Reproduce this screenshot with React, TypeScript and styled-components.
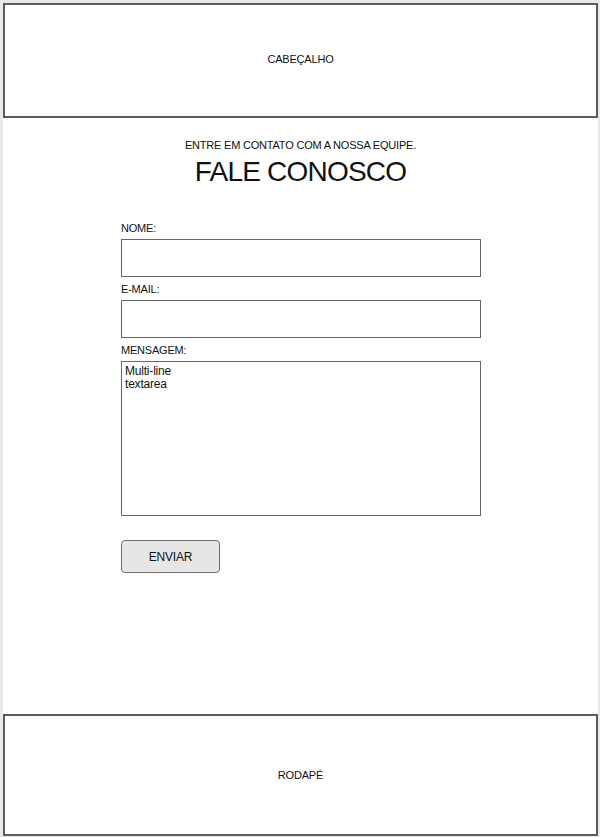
import * as React from 'react'
import styled, { createGlobalStyle } from 'styled-components'

const GlobalStyle = createGlobalStyle`
  html, body {
    margin: 0;
    padding: 0;
    background: #e9e9e9;
  }
  body {
    font-family: "Liberation Sans", Arial, sans-serif;
    color: #111;
  }
  * {
    box-sizing: border-box;
  }
`

const Page = styled.div`
  height: 837px;
  padding: 3px 2px 1px 3px;
`

const Sheet = styled.div`
  height: 100%;
  background: #fff;
  display: flex;
  flex-direction: column;
`

const Band = styled.div<{ $height: number; $lift?: number }>`
  height: ${(p) => p.$height}px;
  flex: none;
  border: 2px solid #5c5c5c;
  padding-bottom: ${(p) => p.$lift || 0}px;
  display: flex;
  align-items: center;
  justify-content: center;
  font-size: 11px;
  letter-spacing: -0.2px;
`

const Main = styled.main`
  flex: 1;
  padding-top: 21px;
`

const Intro = styled.div`
  display: flex;
  flex-direction: column;
  align-items: center;
`

const Subtitle = styled.p`
  margin: 0;
  font-size: 11px;
  line-height: 13px;
  letter-spacing: -0.2px;
`

const Title = styled.h1`
  margin: 4px 0 0;
  font-size: 28px;
  line-height: 32px;
  font-weight: normal;
  letter-spacing: -0.8px;
`

const Form = styled.form`
  width: 360px;
  margin: 34px 0 0 118px;
  display: flex;
  flex-direction: column;
`

const Field = styled.div`
  display: flex;
  flex-direction: column;
  margin-bottom: 6px;
`

const Label = styled.label`
  font-size: 11px;
  line-height: 13px;
  letter-spacing: -0.2px;
  margin-bottom: 4px;
`

const Input = styled.input`
  height: 38px;
  border: 1px solid #666;
  border-radius: 0;
  margin: 0;
  padding: 0 4px;
  font: 12px "Liberation Sans", Arial, sans-serif;
`

const TextArea = styled.textarea`
  height: 155px;
  border: 1px solid #666;
  border-radius: 0;
  margin: 0;
  padding: 3px 3px;
  resize: none;
  font: 12px/13px "Liberation Sans", Arial, sans-serif;
  color: #111;
  letter-spacing: -0.2px;
`

const Button = styled.button`
  width: 99px;
  height: 33px;
  margin-top: 18px;
  background: #e6e6e6;
  border: 1px solid #6e6e6e;
  border-radius: 4px;
  font: 12px "Liberation Sans", Arial, sans-serif;
  color: #111;
  letter-spacing: -0.2px;
`

export default function App() {
  return (
    <Page>
      <GlobalStyle />
      <Sheet>
        <Band $height={115} $lift={3}>CABEÇALHO</Band>
        <Main>
          <Intro>
            <Subtitle>ENTRE EM CONTATO COM A NOSSA EQUIPE.</Subtitle>
            <Title>FALE CONOSCO</Title>
          </Intro>
          <Form onSubmit={(e) => e.preventDefault()}>
            <Field>
              <Label>NOME:</Label>
              <Input type="text" />
            </Field>
            <Field>
              <Label>E-MAIL:</Label>
              <Input type="email" />
            </Field>
            <Field>
              <Label>MENSAGEM:</Label>
              <TextArea defaultValue={'Multi-line\ntextarea'} />
            </Field>
            <div>
              <Button type="submit">ENVIAR</Button>
            </div>
          </Form>
        </Main>
        <Band $height={122}>RODAPÉ</Band>
      </Sheet>
    </Page>
  )
}
